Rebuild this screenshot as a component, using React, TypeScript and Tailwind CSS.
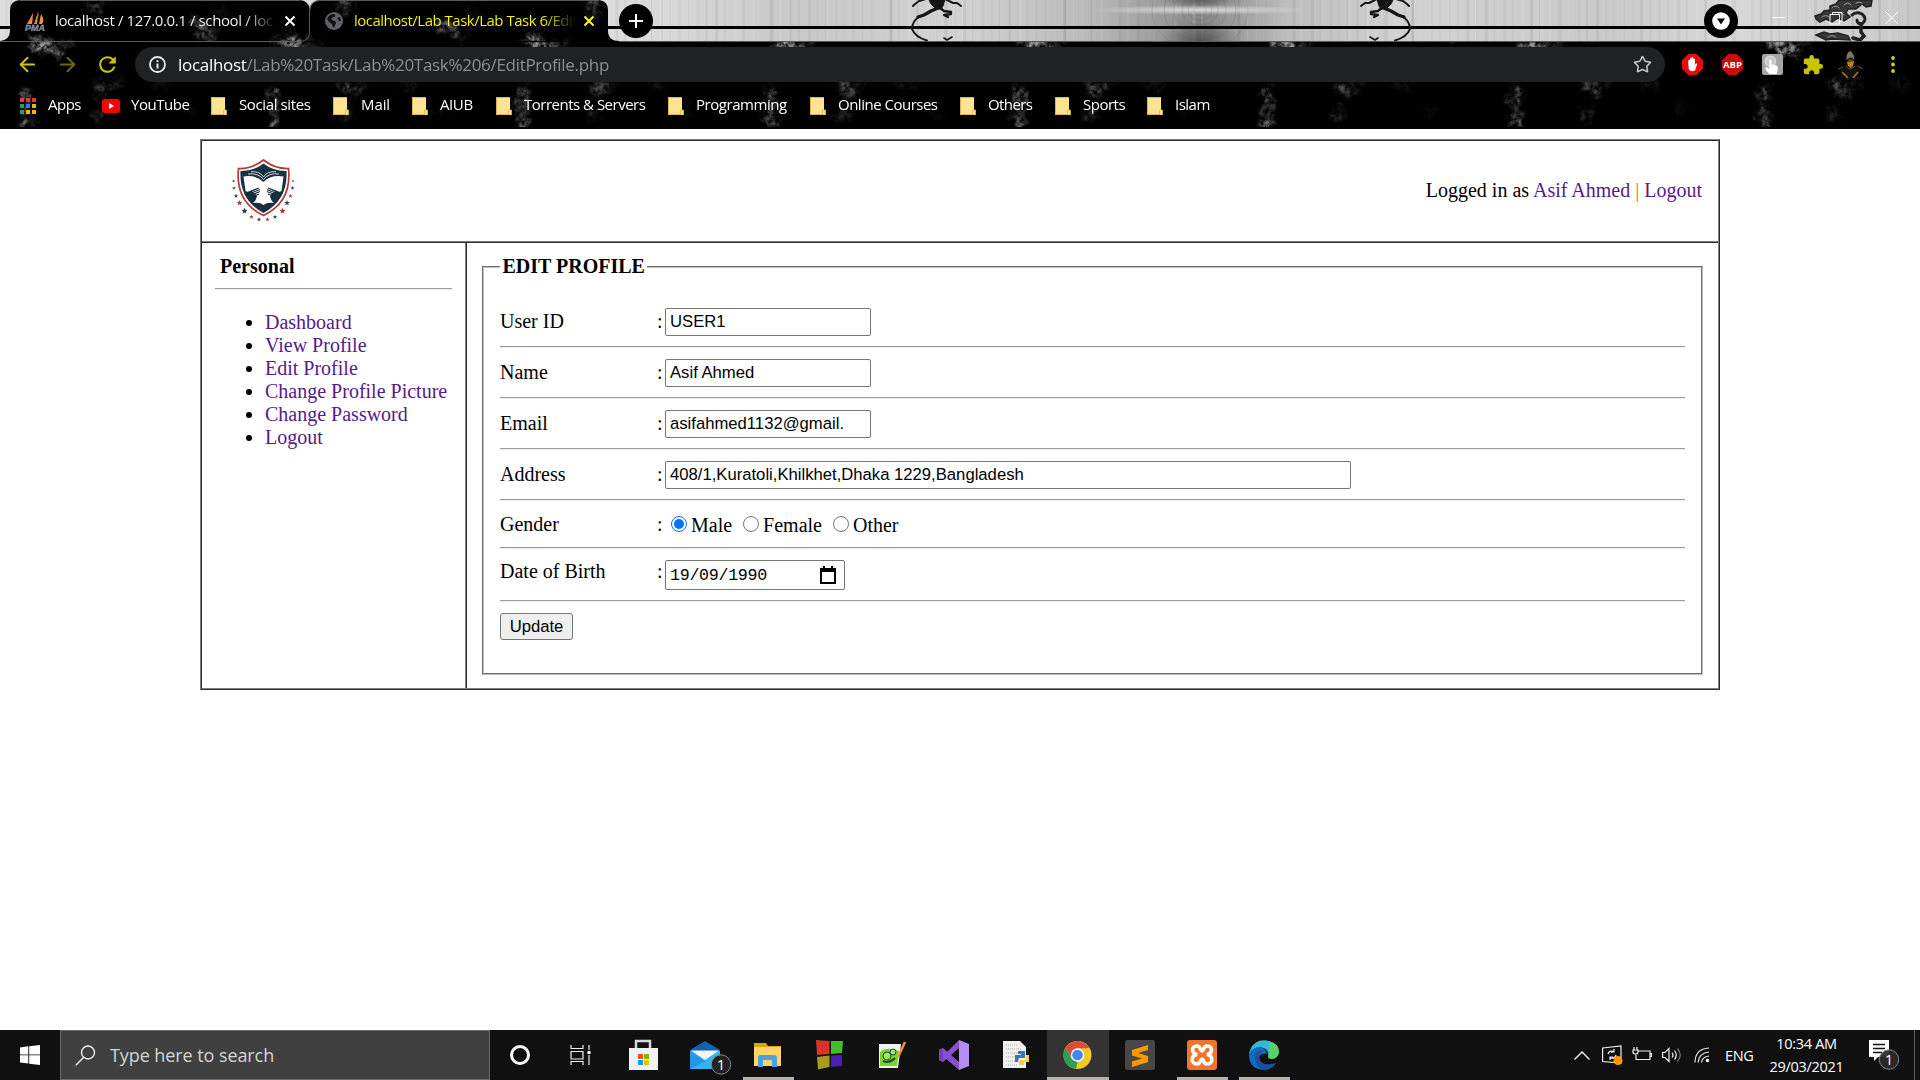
import type { ReactNode } from 'react';
import { ArrowLeft, ArrowRight, Star } from 'lucide-react';
import { MdExtension, MdRefresh } from 'react-icons/md';

const TABS_SHAPE = 'M0 41 Q10 40 10 31 V10 Q10 1 20 0 H300 Q309 1 310 10 Q311 1 320 0 H599 Q608 1 608 10 V31 Q608 41 619 41 Z';

const BLOBS: [number, number, number, number, number, number][] = [
  [41, 44, 12, 6, 20, 0.85],
  [53, 49, 9, 5, 30, 0.7],
  [66, 44, 6, 5, 0, 0.25],
  [26, 96, 3.5, 9, 0, 0.65],
  [27, 112, 3.5, 7, 0, 0.45],
  [26, 125, 4, 7, 0, 0.85],
  [103, 89, 8, 6, 20, 0.42],
  [98, 83, 6, 3, 0, 0.25],
  [117, 82, 4, 8, 20, 0.15],
  [97, 115, 4, 6, 60, 0.3],
  [96, 5, 7, 5, 0, 0.45],
  [97, 13, 4, 3, 0, 0.25],
  [198, 26, 9, 4.5, 30, 0.65],
  [208, 33, 7, 3.5, 30, 0.6],
  [160, 84, 10, 5, 10, 0.12],
  [190, 110, 5, 8, 0, 0.08],
  [222, 12, 12, 4, 30, 0.1],
];

const FRINGE = [0, 1, 2, 3, 4, 5, 6, 7];

function Runner({ flip }: { flip?: boolean }) {
  return (
    <g transform={flip ? 'translate(1412 0) scale(-1 1)' : 'translate(910 0)'} stroke="#151515" fill="none" strokeLinecap="round" strokeLinejoin="round">
      <path d="M19 -1 L35 -1 L33 6 L31 9 L26 9 L21 4 Z" fill="#151515" strokeWidth="1" />
      <path d="M16 -1 L9 1 L5 4 L3 6" strokeWidth="2" />
      <path d="M35 -1 L43 3 L47 3 L51 6" strokeWidth="2" />
      <path d="M29 7 L34 11 L41 12 L41 14 L34 15 L38 17" strokeWidth="2.300" />
      <path d="M28 8 L21 11 L14 15 L8 17" strokeWidth="3.200" />
      <path d="M10 16 Q2 21 2 29 Q5 37 17 40.500" strokeWidth="2" />
      <path d="M34 38 L37 40 L42 37" strokeWidth="1.600" />
    </g>
  );
}

function Dragon() {
  return (
    <g stroke="#222" fill="none" strokeLinecap="round">
      <path d="M1816 19 L1815 16 L1821 14 L1824 11 L1830 10 L1830 6 L1836 4 L1839 0 H1872 L1871 6 L1866 7 L1862 4 L1856 9 L1848 9 L1846 13 L1850 17 L1844 21 L1838 18 L1832 22 L1826 19 L1820 22 Z" fill="#383838" strokeWidth="1.500" />
      <path d="M1852 15 Q1856 11 1862 14 Q1868 19 1862 24 Q1857 24 1857 20" strokeWidth="3" />
      <path d="M1861 24 V32 L1864 36 L1860 40 L1853 38" strokeWidth="3.500" />
      <path d="M1816 35 L1824 32 L1830 34 L1838 33 L1848 36 L1850 40 L1832 39 L1826 40 Z" fill="#383838" strokeWidth="1.500" />
      <path d="M1832 8 q4 -4 7 0 M1844 5 q4 -4 7 0 M1822 17 q4 -3 7 0 M1838 14 q3 -3 6 1 M1856 3 q3 -2 6 0 M1828 37 q4 -3 8 0" stroke="#9c9c9c" strokeWidth="1" />
    </g>
  );
}

function ThemeArt() {
  const streaks = Array.from({ length: 330 }, (_, i) => {
    const x = (i * 5.83 + ((i * 37) % 11)) % 1920;
    return { x, w: 1 + ((i * 13) % 3), light: (i * 7) % 5 < 2, o: 0.05 + ((i * 29) % 10) / 90 };
  });
  return (
    <svg className="absolute inset-0 h-[129px] w-[1920px]" viewBox="0 0 1920 129" aria-hidden="true">
      <defs>
        <linearGradient id="metal" x1="0" x2="1920" y1="0" y2="0" gradientUnits="userSpaceOnUse">
          <stop offset="0" stopColor="#dedede" />
          <stop offset=".33" stopColor="#dcdcdc" />
          <stop offset=".42" stopColor="#c8c8c8" />
          <stop offset=".5" stopColor="#d2d2d2" />
          <stop offset=".57" stopColor="#b8b8b8" />
          <stop offset=".61" stopColor="#989898" />
          <stop offset=".625" stopColor="#848484" />
          <stop offset=".64" stopColor="#989898" />
          <stop offset=".67" stopColor="#bdbdbd" />
          <stop offset=".73" stopColor="#d2d2d2" />
          <stop offset=".84" stopColor="#cacaca" />
          <stop offset=".9" stopColor="#d8d8d8" />
          <stop offset="1" stopColor="#c8c8c8" />
        </linearGradient>
        <radialGradient id="glow">
          <stop offset="0" stopColor="#fff" stopOpacity=".7" />
          <stop offset="1" stopColor="#fff" stopOpacity="0" />
        </radialGradient>
        <radialGradient id="shade">
          <stop offset="0" stopColor="#444" stopOpacity=".7" />
          <stop offset="1" stopColor="#444" stopOpacity="0" />
        </radialGradient>
        <clipPath id="dark">
          <path d={TABS_SHAPE} />
          <rect y="42" width="1920" height="85" />
        </clipPath>
        <filter id="marble" x="0" y="0" width="1920" height="129" filterUnits="userSpaceOnUse">
          <feGaussianBlur in="SourceGraphic" stdDeviation="3" result="b" />
          <feTurbulence type="fractalNoise" baseFrequency="0.09" numOctaves="4" seed="5" result="n" />
          <feDisplacementMap in="b" in2="n" scale="18" xChannelSelector="R" yChannelSelector="G" result="d" />
          <feTurbulence type="fractalNoise" baseFrequency="0.2" numOctaves="3" seed="9" result="m" />
          <feColorMatrix in="m" type="matrix" values="0 0 0 0 1  0 0 0 0 1  0 0 0 0 1  2.4 0 0 0 -0.55" result="g" />
          <feComposite in="d" in2="g" operator="in" />
        </filter>
        <g id="vein">
          {BLOBS.map(([x, y, rx, ry, a, o], i) => (
            <ellipse key={i} cx={x} cy={y} rx={rx} ry={ry} transform={`rotate(${a} ${x} ${y})`} fill="#c4c4c4" opacity={o} />
          ))}
        </g>
      </defs>
      <rect width="1920" height="41" fill="url(#metal)" />
      {streaks.map((s, i) => (
        <rect key={i} x={s.x} width={s.w} height="41" fill={s.light ? '#fff' : '#777'} opacity={s.o} />
      ))}
      <ellipse cx="1200" cy="40" rx="40" ry="18" fill="url(#shade)" />
      <ellipse cx="1200" cy="-2" rx="40" ry="10" fill="url(#shade)" />
      <ellipse cx="1200" cy="10" rx="110" ry="5" fill="url(#glow)" />
      {[6, 12, 18, 26, 36, 48].map((r) => (
        <ellipse key={r} cx="1200" cy="10" rx={r} ry={r * 0.85} fill="none" stroke="#555" strokeOpacity=".2" />
      ))}
      <rect y="26" width="1920" height="3" fill="#000" />
      <Runner />
      <Runner flip />
      <Dragon />
      <rect y="41" width="1920" height="88" fill="#000" />
      <path d={TABS_SHAPE} fill="#000" />
      <g clipPath="url(#dark)">
        <g filter="url(#marble)">
          {FRINGE.map((i) => (
            <use key={i} href="#vein" x={i * 248.3} />
          ))}
        </g>
      </g>
      <path d="M0 41.5 H300 Q309.500 41 309.500 32 V10 Q310 1 320 .5 H599 M619 41.500 H1920 M20 .5 H300" fill="none" stroke="#5a5a5c" />
    </svg>
  );
}

function CloseX({ className }: { className: string }) {
  return (
    <svg className={className} viewBox="0 0 12 12" fill="none" stroke="currentColor" strokeWidth="2">
      <path d="M1.500 1.500 L10.500 10.500 M10.500 1.500 L1.500 10.500" />
    </svg>
  );
}

function Sails() {
  return (
    <svg className="h-5 w-[21px]" viewBox="0 0 21 20">
      <path d="M8 1 Q9 9 2 13 H7 Z M13 0 Q15 8 9 13 H12 Z M16 3 Q20 9 17 13 H14 Z" fill="#f29526" />
      <path d="M2 13 L8 2 L7 13 Z M9 13 L13 1 L12 13Z" fill="#e0913c" />
      <text x="0" y="19.500" fontFamily="Liberation Sans" fontWeight="700" fontStyle="italic" fontSize="8.500" fill="#6a6da0" stroke="#bbb" strokeWidth=".3" textLength="20" lengthAdjust="spacingAndGlyphs">PMA</text>
    </svg>
  );
}

function TabStrip() {
  return (
    <div className="flex h-[42px]">
      <div className="ml-[10px] flex w-[300px] items-center pl-[15px]">
        <Sails />
        <span className="-mt-px ml-[9px] w-[222px] overflow-hidden whitespace-nowrap bg-linear-to-r from-white from-85% to-transparent bg-clip-text text-[15px] tracking-[-0.38px] text-transparent">
          localhost / 127.0.0.1 / school / loc
        </span>
        <CloseX className="ml-[7px] h-3 w-3 text-white" />
      </div>
      <div className="flex w-[298px] items-center pl-[15px]">
        <svg className="h-[18px] w-[18px]" viewBox="0 0 18 18">
          <circle cx="9" cy="9" r="9" fill="#5f6368" />
          <path d="M9 2 Q12 4 9 5 Q5 6 7 8 L10 9 Q12 11 10 13 L9 16 Q7 14 7 12 Q3 10 2 7 Q4 2 9 2Z M12 6 L15 5 L16 9 L14 9Z" fill="#111" />
        </svg>
        <span className="-mt-px ml-[11px] w-[222px] overflow-hidden whitespace-nowrap bg-linear-to-r from-[#ff0] from-85% to-transparent bg-clip-text text-[15px] tracking-[-0.5px] text-transparent">
          localhost/Lab Task/Lab Task 6/Edit
        </span>
        <CloseX className="ml-[7px] h-3 w-3 text-[#ff0]" />
      </div>
      <div className="ml-[11px] mt-1 flex h-[34px] w-[34px] items-center justify-center rounded-full bg-black">
        <svg className="h-4 w-4" viewBox="0 0 16 16" stroke="#fff" strokeWidth="2">
          <path d="M8 1 V15 M1 8 H15" />
        </svg>
      </div>
      <div className="ml-auto mr-[34px] mt-1 flex h-[34px] w-[34px] items-center justify-center rounded-full bg-black">
        <svg className="h-[18px] w-[18px]" viewBox="0 0 18 18">
          <circle cx="9" cy="9" r="8.800" fill="#fff" />
          <path d="M5 6.500 H13 L9 12.500 Z" fill="#000" />
        </svg>
      </div>
      <div className="mr-[21px] flex w-[127px] justify-between pt-[11px]">
        <svg className="h-[14px] w-[14px]" viewBox="0 0 14 14" stroke="#fff"><path d="M0 6.500 H13" /></svg>
        <svg className="h-[14px] w-[14px]" viewBox="0 0 14 14" fill="none" stroke="#fff"><path d="M1 3.500 H10.500 V13 H1 Z M3.500 3.500 V1.500 H13 V10.500 H10.500" /></svg>
        <svg className="h-[14px] w-[14px]" viewBox="0 0 14 14" stroke="#fff"><path d="M.5 .5 L13 13 M13 .5 L.5 13" /></svg>
      </div>
    </div>
  );
}

function Toolbar() {
  return (
    <div className="flex h-[45px] items-center">
      <ArrowLeft className="ml-[16px] h-[23px] w-[23px] text-[#c8c400]" />
      <ArrowRight className="ml-[17px] h-[23px] w-[23px] text-[#6f6c00]" />
      <MdRefresh className="ml-[16px] h-[25px] w-[25px] text-[#c8c400]" />
      <div className="ml-[15px] flex h-[35px] w-[1530px] items-center rounded-full bg-[#202124] pl-[14px] pr-[13px]">
        <svg className="h-[17px] w-[17px]" viewBox="0 0 17 17" fill="none" stroke="#e8eaed" strokeWidth="1.800">
          <circle cx="8.500" cy="8.500" r="7.500" />
          <path d="M8.500 7.500 V12.500 M8.500 4.300 V6.100" strokeWidth="2" />
        </svg>
        <span className="ml-3 whitespace-nowrap text-[17px] leading-none tracking-[-0.3px] text-[#8e8e90]">
          <span className="text-white">localhost</span>/Lab%20Task/Lab%20Task%206/EditProfile.php
        </span>
        <Star className="ml-auto h-[19px] w-[19px] text-[#c4c4c4]" strokeWidth={2} />
      </div>
      <div className="ml-[17px] flex items-center">
        <svg className="h-[21px] w-[21px]" viewBox="0 0 20 20">
          <path d="M6 0 H14 L20 6 V14 L14 20 H6 L0 14 V6 Z" fill="#e40d0d" />
          <path d="M6 9 V6 q.7-1.200 1.500 0 V4.500 q.8-1.200 1.600 0 V3.500 q.8-1.200 1.600 0 V5 q.8-1.200 1.600 0 V10.500 l1-1.500 q1.500-.3 1 1 L12.500 15.500 Q9 18 6.500 14.500 Z" fill="#fff" />
        </svg>
        <svg className="ml-[19px] h-[21px] w-[21px]" viewBox="0 0 20 20">
          <path d="M6 0 H14 L20 6 V14 L14 20 H6 L0 14 V6 Z" fill="#c70d0d" />
          <text x="10" y="13.400" textAnchor="middle" fontFamily="Open Sans" fontWeight="700" fontSize="9" fill="#fff">ABP</text>
        </svg>
        <svg className="ml-[19px] h-[21px] w-[21px]" viewBox="0 0 20 20">
          <rect width="20" height="20" rx="2" fill="#a5a5a5" />
          <circle cx="8" cy="7" r="5" fill="#c8c8c8" stroke="#ddd" />
          <path d="M7 6 q1-1.300 2 0 V10 q4 0 6 2 q.5 4-1 7 H7 Q3 15 3 13 q1-1 4 1 Z" fill="#fff" />
        </svg>
        <MdExtension className="ml-[19px] h-[22px] w-[22px] text-[#c8c400]" />
        <svg className="ml-[13px] h-[28px] w-[28px]" viewBox="0 0 28 28">
          <path d="M3 18 Q8 15 9 12 Q8 1 14 0 Q18 3 18 12 L25 17 L20 27 H8 Z" fill="#11100e" />
          <path d="M9.500 9 Q9 2 13 0 Q17 2 17.500 9 Q14 4 9.500 9Z" fill="#7b7463" />
          <path d="M10 11 L17 10 L16 15 L14 17 L11 15 Z" fill="#b58620" />
          <path d="M11 8.500 H16 V10 H11Z" fill="#6b4a2a" />
          <path d="M5 21 L11 27 M21 21 L16 27" stroke="#a87916" strokeWidth="1.500" />
          <path d="M1 18 L6 16 M21 15 L26 18 M9 15 Q13 21 18 15" stroke="#5c574b" fill="none" />
        </svg>
        <svg className="ml-[26px] h-5 w-1" viewBox="0 0 4 20" fill="#d6d200">
          <circle cx="2" cy="3" r="1.900" /><circle cx="2" cy="9.500" r="1.900" /><circle cx="2" cy="16" r="1.900" />
        </svg>
      </div>
    </div>
  );
}

const BOOKMARKS = [
  { label: 'Social sites', box: 'w-[122px]', gap: 'tracking-[-0.38px]' },
  { label: 'Mail', box: 'w-[79px]', gap: 'tracking-[-0.1px]' },
  { label: 'AIUB', box: 'w-[84px]', gap: 'tracking-[-0.4px]' },
  { label: 'Torrents & Servers', box: 'w-[172px]', gap: 'tracking-[-0.5px]' },
  { label: 'Programming', box: 'w-[142px]', gap: 'tracking-[-0.45px]' },
  { label: 'Online Courses', box: 'w-[150px]', gap: 'tracking-[-0.5px]' },
  { label: 'Others', box: 'w-[95px]', gap: 'tracking-[-0.6px]' },
  { label: 'Sports', box: 'w-[92px]', gap: 'tracking-[-0.5px]' },
  { label: 'Islam', box: 'w-[90px]', gap: 'tracking-[-0.5px]' },
];

const APP_DOTS = ['#e53935', '#e53935', '#e53935', '#2e9e5b', '#2f7de1', '#f4b400', '#2e9e5b', '#f4b400', '#f4b400'];

function BookmarksBar() {
  return (
    <div className="flex h-[37px] items-center pl-5 text-[15px] whitespace-nowrap text-white">
      <div className="flex w-[82px] items-center">
        <span className="grid w-4 grid-cols-3 gap-[2px]">
          {APP_DOTS.map((c, i) => (
            <span key={i} className="h-1 w-1" style={{ background: c }} />
          ))}
        </span>
        <span className="-mt-[2px] ml-3 tracking-[-0.5px]">Apps</span>
      </div>
      <div className="flex w-[109px] items-center">
        <span className="flex h-[14px] w-[18px] items-center justify-center rounded-[3px] bg-[#f00]">
          <svg className="h-[6px] w-[5px]" viewBox="0 0 5 6"><path d="M0 0 L5 3 L0 6Z" fill="#fff" /></svg>
        </span>
        <span className="-mt-[2px] ml-[11px] tracking-[-0.45px]">YouTube</span>
      </div>
      {BOOKMARKS.map((b) => (
        <div key={b.label} className={`flex items-center ${b.box}`}>
          <svg className="h-[18px] w-4" viewBox="0 0 16 18">
            <rect width="14" height="18" fill="#ffe391" />
            <path d="M0 .5 H14 M0 17.500 H14 M.5 0 V18" stroke="#dcb550" />
            <path d="M12.500 18 V13 H15.500 V18 Z" fill="#ffe391" stroke="#dcb550" strokeWidth=".8" />
          </svg>
          <span className={`-mt-[2px] ml-3 ${b.gap}`}>{b.label}</span>
        </div>
      ))}
    </div>
  );
}

const STARS: [number, number, number, number][] = [
  [1.500, 22, 1.500, 0], [2, 29, 2, 1], [4, 37, 2.200, 0], [7.500, 44, 2.900, 1], [12.500, 52, 3.300, 0], [19.500, 58, 2.300, 1], [27, 60.500, 2.300, 0],
  [61, 22, 1.500, 1], [60.500, 29, 2, 0], [58.500, 37, 2.200, 1], [55, 44, 2.900, 0], [50.500, 52, 3.300, 1], [43, 58, 2.300, 0], [35.500, 60.500, 2.300, 1],
];

function starPoints(cx: number, cy: number, r: number) {
  return Array.from({ length: 10 }, (_, i) => {
    const q = i % 2 ? r * 0.45 : r;
    const a = (Math.PI / 5) * i - Math.PI / 2;
    return `${cx + q * Math.cos(a)},${cy + q * Math.sin(a)}`;
  }).join(' ');
}

function SchoolLogo() {
  return (
    <svg className="h-[64px] w-[63px]" viewBox="0 0 63 64">
      <path d="M31.500 1 Q20 10 6.500 9.500 Q3 43 31.500 56.500 Q60 43 56.500 9.500 Q43 10 31.500 1Z" fill="#fff" stroke="#b23b34" strokeWidth="1.700" />
      <path d="M31.500 4.500 Q21 12.500 8.500 12 Q7 41 31.500 54 Q56 41 54.500 12 Q42 12.500 31.500 4.500Z" fill="#18303f" />
      <path d="M11.500 17.500 Q24 15.500 31.500 23 Q39 15.500 51.500 17.500 L49.500 32 L45 34 L38 37 Q39 42 42 44 Q35 43 31.500 46 Q28 43 21 44 Q24 42 25 37 L18 34 L13.500 32 Z" fill="#fff" />
      <path d="M16 15 Q26 13.500 31.500 20.500 Q37 13.500 47 15 M19 12.700 Q28 12 31.500 18 Q35 12 44 12.700" fill="none" stroke="#fff" strokeWidth=".8" />
      <path d="M14 36 L19 32 L27 29 M17 35 L28 30.500 M19 36 L28 32.500 M20 38 L27 35 M49 36 L44 32 L36 29 M46 35 L35 30.500 M44 36 L35 32.500 M43 38 L36 35" stroke="#18303f" strokeWidth="1.100" />
      <path d="M12 34 L18 32 L24 35 Q23 41 18 43 Z M51 34 L45 32 L39 35 Q40 41 45 43 Z" fill="#18303f" />
      {STARS.map(([x, y, r, red], i) => (
        <polygon key={i} points={starPoints(x, y, r)} fill={red ? '#b23b34' : '#2a4356'} />
      ))}
    </svg>
  );
}

function Rule({ className = '' }: { className?: string }) {
  return <hr className={`h-[2px] border-x-0 border-t border-b border-t-[#9a9a9a] border-b-[#eeeeee] ${className}`} />;
}

function Row({ label, className = 'h-7 pt-[2px]', children }: { label: string; className?: string; children: ReactNode }) {
  return (
    <>
      <div className={`flex items-start ${className}`}>
        <span className="w-[157px]">{label}</span>
        <span className="w-2">:</span>
        {children}
      </div>
      <Rule className="mt-[10px] mb-[11px]" />
    </>
  );
}

function TextBox({ value, width = 'w-[206px]' }: { value: string; width?: string }) {
  return (
    <span className={`-mt-[2px] flex h-7 items-center overflow-hidden rounded-[2px] border border-[#767676] bg-white pl-1 pb-px font-['Liberation_Sans',sans-serif] text-[16.67px] whitespace-nowrap ${width}`}>
      {value}
    </span>
  );
}

function Radio({ label, checked, className }: { label: string; checked?: boolean; className: string }) {
  return (
    <label className={`flex ${className}`}>
      <span className={`mt-[3px] flex h-4 w-4 items-center justify-center rounded-full border bg-white ${checked ? 'border-[#0075ff]' : 'border-[#767676]'}`}>
        {checked && <span className="h-[10px] w-[10px] rounded-full bg-[#0075ff]" />}
      </span>
      <span className="ml-1 pt-px">{label}</span>
    </label>
  );
}

const LINKS = ['Dashboard', 'View Profile', 'Edit Profile', 'Change Profile Picture', 'Change Password', 'Logout'];

function ProfilePage() {
  return (
    <main className="h-[901px] bg-white pt-[10px] font-['Liberation_Serif',serif] text-[20px] leading-[23px] text-black">
      <div className="mx-auto h-[551px] w-[1520px] border border-t-[#808080] border-r-[#2c2c2c] border-b-[#2c2c2c] border-l-[#808080]">
        <div className="flex h-full flex-col border border-t-[#2c2c2c] border-r-[#808080] border-b-[#808080] border-l-[#2c2c2c]">
          <header className="flex h-[100px] shrink-0 items-center justify-between pr-4 pl-[30px]">
            <SchoolLogo />
            <p className="pb-px">
              Logged in as <a className="text-[#551a8b]">Asif Ahmed</a> <span className="text-[#c0703a]">|</span> <a className="text-[#551a8b]">Logout</a>
            </p>
          </header>
          <div className="h-[2px] shrink-0 border-t border-b border-t-[#808080] border-b-[#2c2c2c]" />
          <div className="flex grow">
            <nav className="w-[263px] pt-3 pr-[13px] pl-[13px]">
              <h2 className="pl-[5px] font-bold">Personal</h2>
              <Rule className="mt-[10px] mb-[21px]" />
              <ul className="list-disc pl-[50px]">
                {LINKS.map((l) => (
                  <li key={l} className="whitespace-nowrap"><a className="text-[#551a8b]">{l}</a></li>
                ))}
              </ul>
            </nav>
            <div className="w-[2px] border-r border-l border-l-[#808080] border-r-[#2c2c2c]" />
            <section className="grow pt-3 pr-[15px] pl-[15px]">
              <fieldset className="h-[420px] border-2 border-[#c0c0c0] [border-style:groove] px-4">
                <legend className="px-[2.5px] font-bold">EDIT PROFILE</legend>
                <div className="pt-[30px]">
                  <Row label="User ID"><TextBox value="USER1" /></Row>
                  <Row label="Name"><TextBox value="Asif Ahmed" /></Row>
                  <Row label="Email"><TextBox value="asifahmed1132@gmail." /></Row>
                  <Row label="Address"><TextBox value="408/1,Kuratoli,Khilkhet,Dhaka 1229,Bangladesh" width="w-[686px]" /></Row>
                  <Row label="Gender" className="h-[25px] pt-px">
                    <Radio label="Male" checked className="ml-[6px]" />
                    <Radio label="Female" className="ml-[11px]" />
                    <Radio label="Other" className="ml-[11px]" />
                  </Row>
                  <Row label="Date of Birth" className="h-[30px]">
                    <span className="flex h-[30px] w-[180px] items-center justify-between rounded-[2px] border border-[#767676] pr-2 pl-1 font-['Liberation_Mono',monospace] text-[16.670px] tracking-[-0.3px]">
                      <span className="pt-px">19/09/1990</span>
                      <svg className="h-[18px] w-4" viewBox="0 0 16 18">
                        <path d="M1 3 H15 V17 H1Z" fill="none" stroke="#000" strokeWidth="2" />
                        <path d="M0 2 H16 V6 H0Z M3 0 H5 V3 H3Z M11 0 H13 V3 H11Z" />
                      </svg>
                    </span>
                  </Row>
                  <button className="flex h-[27px] w-[73px] items-center justify-center rounded-[3px] border border-[#767676] bg-[#efefef] font-['Liberation_Sans',sans-serif] text-[16.670px]">Update</button>
                </div>
              </fieldset>
            </section>
          </div>
        </div>
      </div>
    </main>
  );
}

const TASKS: { id: string; line?: string; cell?: string; art: ReactNode }[] = [
  { id: 'store', art: <><path d="M7 9 V1 H21 V9" fill="none" stroke="#d8d8d8" strokeWidth="2.500" /><path d="M0 8 H29 V30 H0Z" fill="#f2f2f2" /><path d="M9 14 h5 v5 h-5z" fill="#f25022" /><path d="M15 14 h5 v5 h-5z" fill="#7fba00" /><path d="M9 20 h5 v5 h-5z" fill="#00a4ef" /><path d="M15 20 h5 v5 h-5z" fill="#ffb900" /></> },
  { id: 'mail', art: <><path d="M-1 10 L14 1 L29 10 V14 H-1Z" fill="#0f62b5" /><path d="M-1 11 H29 V29 H-1Z" fill="#32b4f0" /><path d="M-1 11 L14 21 L-1 29Z" fill="#2398e0" /><path d="M0 10.500 H28 L14 20Z" fill="#f5f5f5" /><circle cx="30" cy="24.500" r="9.700" fill="#222" stroke="#888" /><text x="30" y="30" textAnchor="middle" fontSize="15" fill="#fff" fontFamily="Open Sans">1</text></> },
  { id: 'files', line: 'w-[51px]', art: <><path d="M1 3 H13 L15 6 H28 V10 H1Z" fill="#e3a008" /><path d="M1 7 H28 V26 H1Z" fill="#ffd566" /><path d="M5 27 V18 Q5 15 8 15 H21 Q24 15 24 18 V27 H19 V20 H10 V27Z" fill="#4aa0e0" /></> },
  { id: 'blocks', art: <><path d="M1 0 L14.500 1 V14 L2 15Z" fill="#d5352a" /><path d="M16 1 L28 1 L27 13 L16 14Z" fill="#46bd2d" /><path d="M2 17 L14.500 15.500 V27 L3 29.500Z" fill="#a89c20" /><path d="M16 15.500 L27 15 L27 26 L16 27Z" fill="#4a1fb0" /></> },
  { id: 'notepad', art: <><path d="M2 4 H24 L21 28 H2Z" fill="#f2f2f2" /><path d="M3 12 Q10 6 22 11 L20 26 H3Z" fill="#7ed321" /><circle cx="10" cy="16" r="4" fill="#9bea5a" stroke="#244" /><circle cx="16" cy="12" r="3" fill="#9bea5a" stroke="#244" /><path d="M6 21 Q12 24 18 18" stroke="#244" fill="none" strokeWidth="2" /><path d="M28 2 L21 17" stroke="#e89a2b" strokeWidth="2.500" /></> },
  { id: 'vs', art: <><path d="M20 0 L30 4 V26 L20 30 Z" fill="#b48cf2" /><path d="M20 0 V8 L4 22 L0 20 V10 L4 8 L20 22 V30 L4 16 Z" fill="#8a4fd0" /><path d="M0 10 L4 8 V22 L0 20Z" fill="#7a3fc0" /></> },
  { id: 'python', art: <><path d="M2 1 H19 L25 7 V28 H2Z" fill="#f0f0f0" /><path d="M5 5 H17 M5 9 H21 M5 13 H21 M5 17 H14 M5 21 H14 M5 25 H17" stroke="#aaa" strokeDasharray="1 1" /><path d="M17 11 H24 V18 H18 Q17 20 17 22 H14 V15 H20 V14 H17Z" fill="#3c78aa" /><path d="M28 15 V22 H23 V25 H18 V20 H25 V15Z" fill="#f7cf4a" /></> },
  { id: 'chrome', line: 'w-full', cell: 'bg-[#333333]', art: <><circle cx="14.500" cy="15" r="14" fill="#f5c727" /><path d="M2.400 8 A14 14 0 0 1 26.600 8 L14.500 8.500 L8.500 18Z" fill="#dd4b3e" /><path d="M2.400 8 L9 19 L14.500 22 L13 29 A14 14 0 0 1 2.400 8Z" fill="#2e9e54" /><circle cx="14.500" cy="15" r="6.700" fill="#fff" /><circle cx="14.500" cy="15" r="5.300" fill="#4285f4" /></> },
  { id: 'sublime', art: <><rect width="30" height="30" rx="2.500" fill="#474747" /><path d="M23 5 V10 L13 13 L23 16 V22 L7 27 V21.500 L17 18.500 L7 15.500 V10Z" fill="#ff9800" /></> },
  { id: 'xampp', line: 'w-[51px]', art: <><rect width="30" height="30" rx="3" fill="#f0752a" /><path d="M10 6 C4 6 4 13 10 14.500 C3 16 4 24 10 24 C14 24 13 19 15 19 C17 19 16 24 20 24 C26 24 27 16 20 14.500 C26 13 26 6 20 6 C16 6 17 11 15 11 C13 11 14 6 10 6Z" fill="none" stroke="#fff" strokeWidth="3.600" /></> },
  { id: 'edge', line: 'w-[51px]', art: <><path d="M0 15 Q0 6 10 7 Q17 8 18 14 Q10 13 10 19 Q12 27 22 26 L27 23 Q23 30 15 30 Q0 29 0 15Z" fill="#0f6ac0" /><path d="M6 19 Q6 10 14 10 Q9 14 10.500 19 Q13 27 27 23 Q22 30 15 30 Q7 28 6 19Z" fill="#1552a0" /><path d="M0 14 Q3 0 16 .3 Q30 2 30 12 Q29 19 22 19 Q18 18 19.500 15 Q19 8 11 7 Q3 7 0 14Z" fill="#35b9d0" /><path d="M20 1.500 Q30 4 30 12 Q29 19 22 19 Q18 18 19.500 15 Q21 8 20 1.500Z" fill="#56d364" /></> },
];

function Taskbar() {
  return (
    <footer className="flex h-[50px] bg-[#101010] text-white">
      <div className="flex w-[60px] items-center justify-center">
        <svg className="h-5 w-5" viewBox="0 0 20 20" fill="#fff"><path d="M0 2.500 L8.300 1.300 V9.500 H0Z M9.200 1.200 L20 0 V9.500 H9.200Z M0 10.300 H8.300 V18.600 L0 17.500Z M9.200 10.300 H20 V20 L9.200 18.700Z" /></svg>
      </div>
      <div className="flex w-[430px] items-center border border-[#6a6a6a] bg-[#404040] pl-[14px]">
        <svg className="h-[21px] w-[21px]" viewBox="0 0 21 21" fill="none" stroke="#f0f0f0" strokeWidth="1.400"><circle cx="13" cy="7.500" r="6.500" /><path d="M8.500 12.500 L.8 20.300" /></svg>
        <span className="ml-[14px] text-[18px] tracking-[-0.08px] text-[#d4d4d4]">Type here to search</span>
      </div>
      <div className="flex w-[60px] items-center justify-center">
        <span className="h-5 w-5 rounded-full border-[3px] border-white" />
      </div>
      <div className="flex w-[63px] items-center justify-center pr-[3px]">
        <svg className="h-5 w-[21px]" viewBox="0 0 21 20" fill="none" stroke="#eee" strokeWidth="1.200"><path d="M1 0 V3.500 H13 V0 M1 6.500 H13 V14 H1Z M1 20 V16.500 H13 V20 M19 0 V5 M19 10 V20" /><path d="M17.500 6 h3 v3 h-3z" fill="#fff" stroke="none" /></svg>
      </div>
      {TASKS.map((t) => (
        <div key={t.id} className={`flex w-[62px] flex-col items-center ${t.cell ?? ''}`}>
          <svg className="mt-[10px] h-[30px] w-[30px] overflow-visible" viewBox="0 0 30 30">{t.art}</svg>
          {t.line && <span className={`mt-auto h-[3px] bg-[#b4b2ad] ${t.line}`} />}
        </div>
      ))}
      <div className="ml-auto flex items-center">
        <svg className="h-[9px] w-4" viewBox="0 0 16 9" fill="none" stroke="#fff" strokeWidth="1.300"><path d="M.5 8.500 L8 1 L15.500 8.500" /></svg>
        <svg className="ml-3 h-5 w-[21px]" viewBox="0 0 21 20" fill="none" stroke="#eee" strokeWidth="1.200"><path d="M.6 3 L19 1 V18 L.6 16.500Z M6 9 Q7 5 12 6.500 M12 4 V7 H9 M14 10 Q13 14 8 13 M8 15 V12 H11" /><circle cx="16" cy="15.500" r="4.500" fill="#ff9800" stroke="none" /></svg>
        <svg className="ml-[9px] h-4 w-5" viewBox="0 0 20 16" fill="none" stroke="#eee" strokeWidth="1.200"><path d="M6 4 H18 V12.500 H4 V8 M18 6.500 H19.500 V9.500 H18 M2 0 V3 M5 0 V3 M1 3 H6 V5 Q6 7 3.500 7 Q1 7 1 5Z" /></svg>
        <svg className="ml-[10px] h-4 w-5" viewBox="0 0 20 16" fill="none" stroke="#eee" strokeWidth="1.200"><path d="M.6 5.500 H3 L7 1.500 V14.500 L3 10.500 H.6Z M10 5.500 Q12 8 10 10.500 M12.500 3.500 Q16 8 12.500 12.500" /><path d="M15.500 1.500 Q21 8 15.500 14.500" stroke="#777" /></svg>
        <svg className="ml-3 h-4 w-4" viewBox="0 0 16 16" fill="none" stroke="#ddd" strokeWidth="1.200"><path d="M1 15.500 Q1 2 15 1 M4 15.500 Q5 6 15 5 M7.500 15.500 Q8 10 15 9" /><circle cx="13.500" cy="13.500" r="1.700" fill="#fff" stroke="none" /></svg>
        <span className="ml-[15px] w-[28px] pt-px text-[14.500px] tracking-[-0.4px] whitespace-nowrap">ENG</span>
        <div className="ml-[12px] w-[83px] text-center text-[14.500px] leading-[23px] tracking-[-0.3px] whitespace-nowrap">
          <div>10:34 AM</div>
          <div>29/03/2021</div>
        </div>
        <svg className="ml-[21px] h-[30px] w-[31px]" viewBox="0 0 31 30">
          <path d="M0 0 H20 V17 H9 L5 21 V17 H0Z" fill="#fff" />
          <path d="M4 4.500 H16 M4 8.500 H16 M4 12.500 H13" stroke="#111" strokeWidth="1.300" />
          <circle cx="20" cy="19.500" r="9.700" fill="#2a2a2a" fillOpacity=".93" stroke="#888" />
          <text x="20" y="25" textAnchor="middle" fontFamily="Open Sans" fontSize="15" fill="#fff">1</text>
        </svg>
        <span className="ml-[14px] h-[50px] w-px bg-[#5c5c5c]" />
        <span className="w-[5px]" />
      </div>
    </footer>
  );
}

export default function App() {
  return (
    <div className="h-[1080px] w-[1920px] overflow-hidden bg-white font-['Open_Sans',sans-serif]">
      <div className="relative h-[129px] bg-black">
        <ThemeArt />
        <div className="relative">
          <TabStrip />
          <Toolbar />
          <BookmarksBar />
        </div>
      </div>
      <ProfilePage />
      <Taskbar />
    </div>
  );
}
